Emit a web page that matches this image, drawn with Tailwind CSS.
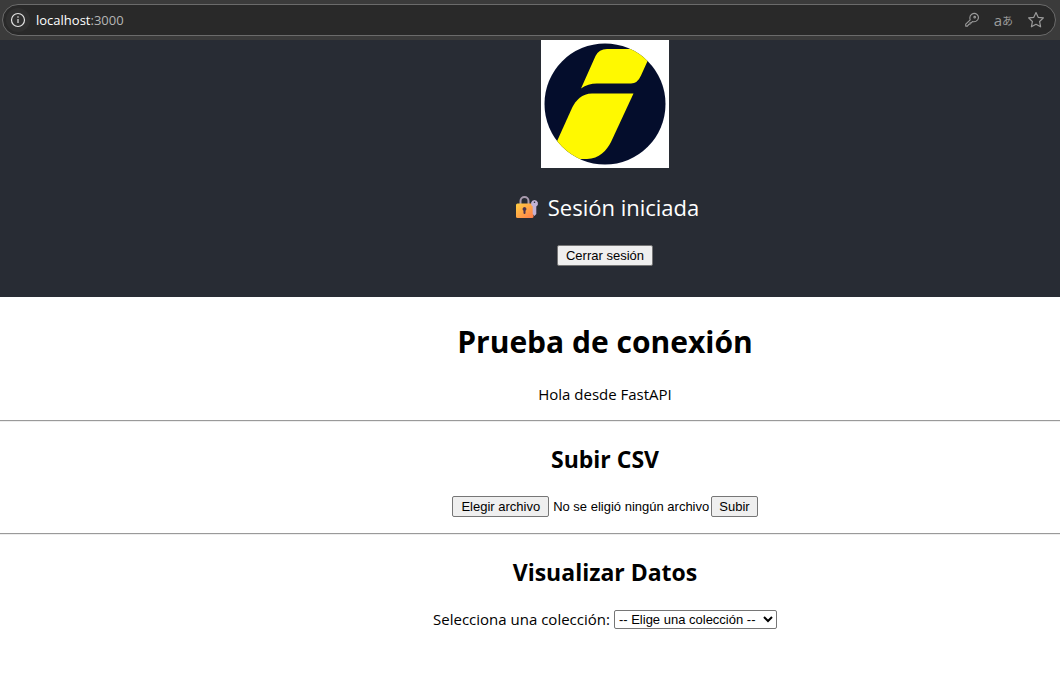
<!DOCTYPE html>
<html lang="es">
<head>
<meta charset="utf-8">
<meta name="viewport" content="width=device-width, initial-scale=1">
<title>Prueba de conexión</title>
<script src="https://cdn.jsdelivr.net/npm/@tailwindcss/browser@4"></script>
</head>
<body class="bg-white text-black font-['Segoe_UI','Open_Sans',sans-serif]">
<div class="h-10 bg-[#3b3b3b] pt-1 pl-0.5 pr-1">
  <div class="flex h-8 items-center rounded-full border border-[#6b6b6b] bg-[#292929] pl-[3px] pr-[10px] text-[#9b9b9b]">
    <button class="grid size-6 place-items-center rounded-full bg-[#303030] text-[#e4e4e4]" aria-label="Información del sitio">
      <svg class="size-4" viewBox="0 0 16 16" fill="none" stroke="currentColor" stroke-width="1.2"><circle cx="8" cy="8" r="6.5"/><path d="M8 7v4"/><circle cx="8" cy="5" r=".4" fill="currentColor" stroke-width=".7"/></svg>
    </button>
    <a href="#" class="ml-1.5 text-[13px] leading-5"><span class="font-medium text-white">localhost</span><span class="text-[#b5b5b5]">:3000</span></a>
    <div class="ml-auto flex items-center gap-3.5">
      <button aria-label="Contraseñas"><svg class="size-4" viewBox="0 0 16 16" fill="none" stroke="currentColor" stroke-width="1.1" stroke-linejoin="round"><path d="M6.2 7.800C5.500 5.700 6 3.500 7.700 2.300c1.700-1.200 4-1 5.500.4 1.400 1.500 1.500 3.700.3 5.300-1.200 1.500-3.200 2.100-5.100 1.600L7.300 10.900H6v1.400H4.800L3.400 14.100H1.700V12.200Z"/><circle cx="10.700" cy="5.200" r=".8"/></svg></button>
      <button aria-label="Traducir" class="flex items-center leading-5"><span class="text-[15px]">a</span><span class="text-[11px] font-['Noto_Sans_CJK_JP',sans-serif]">あ</span></button>
      <button aria-label="Agregar a favoritos"><svg class="size-[18px]" viewBox="0 0 18 18" fill="none" stroke="currentColor" stroke-width="1.2" stroke-linejoin="round"><path d="M9 1.600 11.200 6.300 16.400 6.900 12.600 10.500 13.600 15.800 9 13.300 4.400 15.800 5.400 10.500 1.600 6.900 6.800 6.300Z"/></svg></button>
    </div>
  </div>
</div>
<header class="flex flex-col items-center bg-[#282c34] pb-[31px] pl-[150px] text-white">
  <svg class="size-32" viewBox="0 0 128 128" role="img" aria-label="Logotipo">
    <defs><clipPath id="disc"><circle cx="64" cy="64" r="60.500"/></clipPath></defs>
    <path fill="#fff" d="M0 0h128v128H0z"/>
    <circle cx="64" cy="64" r="60.500" fill="#040d2c"/>
    <g clip-path="url(#disc)" fill="#fff900">
      <path d="M40 48.500 54.500 16Q58 9 66 9H112L100 35.500Q96.500 43.500 90 43.500H56Q47 43.500 40 48.500Z"/>
      <path d="M92.500 53.500H51C41 53.500 35 60 31 68L8 119H46C58 119 66 110 70 102Z"/>
    </g>
  </svg>
  <p class="mt-[23px] flex items-center gap-[9px] pl-1 text-[22px] leading-8">
    <svg class="size-6" viewBox="0 0 24 24" role="img" aria-label="Candado con llave">
      <defs><linearGradient id="body" x1="0" y1="0" x2="1" y2="1"><stop offset="0" stop-color="#ffcf42"/><stop offset="1" stop-color="#ff7b4b"/></linearGradient></defs>
      <path d="M5.500 10V6a4 4 0 0 1 8 0v4" fill="none" stroke="#a99bae" stroke-width="2"/>
      <rect x="1" y="8.500" width="17.500" height="14.500" rx="1.500" fill="url(#body)"/>
      <path d="M9.500 12a2 2 0 0 1 1 3.700V18a1 1 0 0 1-2 0v-2.300A2 2 0 0 1 9.500 12Z" fill="#4b344e"/>
      <path fill-rule="evenodd" d="M19.500 5a3.500 3.500 0 0 1 1.800 6.500V19l-1.800 2-1.800-2v-7.500A3.500 3.500 0 0 1 19.500 5Zm0 1.400a.8.800 0 1 0 0 1.600.8.800 0 0 0 0-1.600Z" fill="#c3b2d5"/>
    </svg>
    Sesión iniciada
  </p>
  <button class="mt-[22px] h-[21px] rounded-[2px] border border-[#767676] bg-[#efefef] px-2 font-['Liberation_Sans',sans-serif] text-[13px] leading-[19px] text-black">Cerrar sesión</button>
</header>
<main class="pt-[23px] text-center">
  <h1 class="pl-[150px] text-[30px] leading-[43px] font-bold">Prueba de conexión</h1>
  <p class="mt-[21px] pl-[150px] text-[15px] leading-[21px]">Hola desde FastAPI</p>
  <hr class="mt-[15px] h-0.5 border-t border-b border-t-[#9a9a9a] border-b-[#eeeeee]">
  <section class="pl-[150px]">
    <h2 class="mt-[21px] text-[23px] leading-8 font-bold">Subir CSV</h2>
    <form class="mt-[21px] flex justify-center font-['Liberation_Sans',sans-serif] text-[13px] leading-[19px]">
      <input id="csv" type="file" accept=".csv" class="sr-only">
      <label for="csv" class="flex"><span class="h-[21px] rounded-[2px] border border-[#767676] bg-[#efefef] px-2">Elegir archivo</span><span class="mx-1 mr-0.5 leading-[21px]">No se eligió ningún archivo</span></label>
      <button type="button" class="h-[21px] rounded-[2px] border border-[#767676] bg-[#efefef] px-[7px]">Subir</button>
    </form>
  </section>
  <hr class="mt-4 h-0.5 border-t border-b border-t-[#9a9a9a] border-b-[#eeeeee]">
  <section class="pl-[150px]">
    <h2 class="mt-[21px] text-[23px] leading-8 font-bold">Visualizar Datos</h2>
    <div class="mt-[21px] flex items-center justify-center gap-1">
      <label for="coleccion" class="text-[15px] leading-[21px]">Selecciona una colección:</label>
      <select id="coleccion" class="h-[19px] w-[163px] rounded-[2px] border border-[#767676] bg-white font-['Liberation_Sans',sans-serif] text-[13px] leading-[17px]"><option>-- Elige una colección --</option></select>
    </div>
  </section>
</main>
</body>
</html>
